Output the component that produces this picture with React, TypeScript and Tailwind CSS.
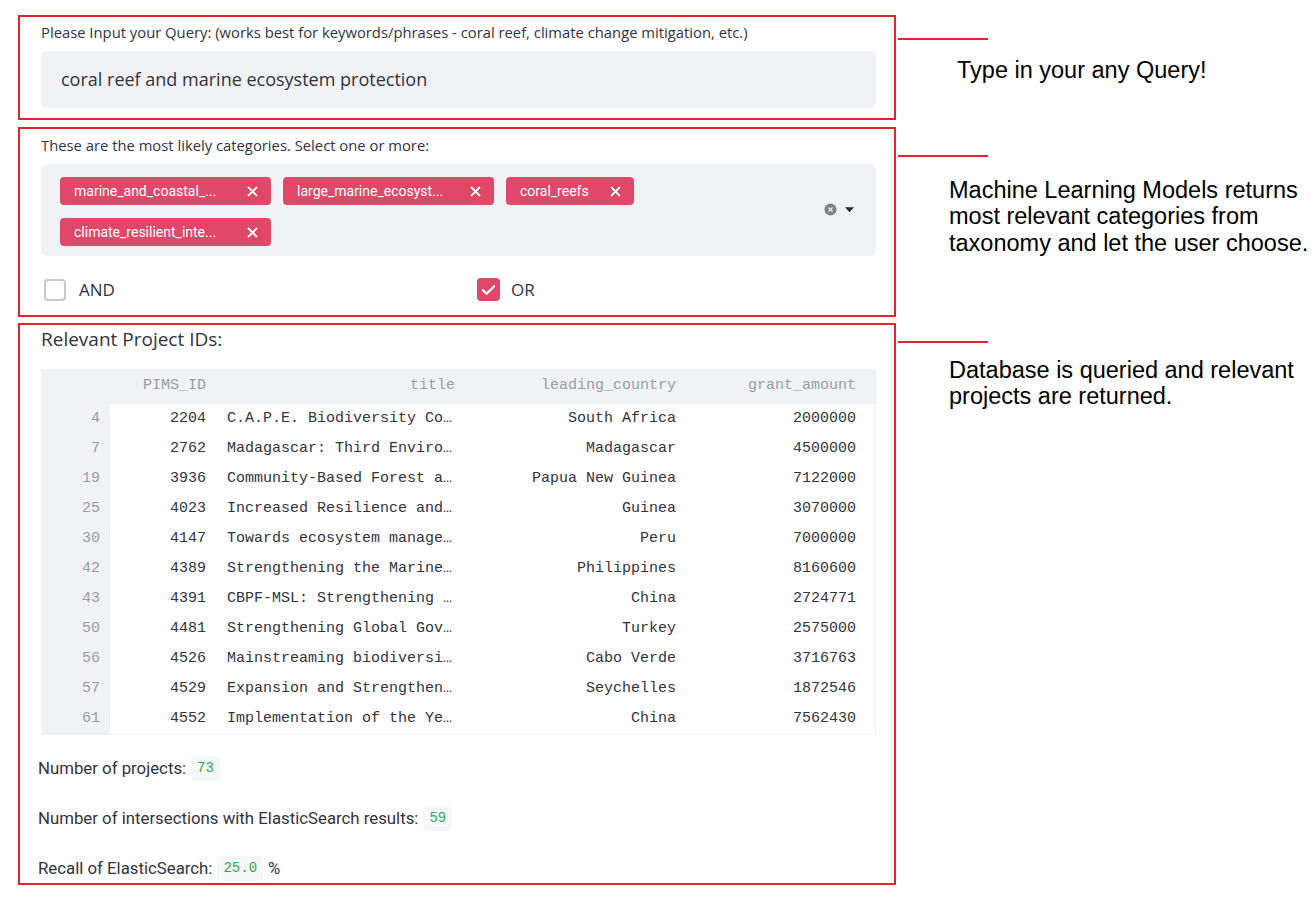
const RED = "border-[#e0262c]";
const OPEN = { fontFamily: '"Open Sans", Roboto, sans-serif' };
const MONO = { fontFamily: '"Liberation Mono", monospace' };

const rows: [number, number, string, string, number][] = [
  [4, 2204, "C.A.P.E. Biodiversity Co…", "South Africa", 2000000],
  [7, 2762, "Madagascar: Third Enviro…", "Madagascar", 4500000],
  [19, 3936, "Community-Based Forest a…", "Papua New Guinea", 7122000],
  [25, 4023, "Increased Resilience and…", "Guinea", 3070000],
  [30, 4147, "Towards ecosystem manage…", "Peru", 7000000],
  [42, 4389, "Strengthening the Marine…", "Philippines", 8160600],
  [43, 4391, "CBPF-MSL: Strengthening …", "China", 2724771],
  [50, 4481, "Strengthening Global Gov…", "Turkey", 2575000],
  [56, 4526, "Mainstreaming biodiversi…", "Cabo Verde", 3716763],
  [57, 4529, "Expansion and Strengthen…", "Seychelles", 1872546],
  [61, 4552, "Implementation of the Ye…", "China", 7562430],
];

function Cross() {
  return (
    <svg width="11" height="11" viewBox="0 0 10 10" className="shrink-0">
      <path d="M1.5 1.5 L8.5 8.5 M8.5 1.5 L1.5 8.5" stroke="white" strokeWidth="1.8" strokeLinecap="round" />
    </svg>
  );
}

function Tag({ label, w = "w-[211px]" }: { label: string; w?: string }) {
  return (
    <div className={`flex h-[28px] ${w} items-center justify-between rounded-[4px] bg-[#e0486a] pl-[14px] pr-[13px] text-[14px] text-white`}>
      <span>{label}</span>
      <Cross />
    </div>
  );
}

function Note({ top, text, pad }: { top: string; text: string[]; pad: string }) {
  return (
    <div className="flex flex-col">
      <div className={`ml-[2px] h-[1.5px] w-[90px] bg-[#e0262c] ${top}`} />
      <div className={`${pad} whitespace-nowrap text-[23.5px] leading-[26.5px] text-black`} style={{ fontFamily: '"Liberation Sans", Arial, sans-serif' }}>
        {text.map((t) => (
          <div key={t}>{t}</div>
        ))}
      </div>
    </div>
  );
}

function Code({ children }: { children: React.ReactNode }) {
  return (
    <span className="ml-[5px] inline-flex h-[25px] items-center rounded-[4px] bg-[#f6f7f9] px-[6px] text-[14px] text-[#35a852]" style={MONO}>
      {children}
    </span>
  );
}

export default function App() {
  return (
    <div className="h-[908px] w-[1313px] overflow-hidden bg-white pl-[18px] pt-[15px] text-[#31333f]" style={{ fontFamily: 'Roboto, "Noto Sans", sans-serif' }}>
      {/* query */}
      <div className="flex">
        <div className={`h-[105px] w-[878px] shrink-0 border-2 ${RED} pl-[21px] pr-[18px] pt-[6px]`}>
          <div className="text-[14.8px] leading-[19px]" style={OPEN}>
            Please Input your Query: (works best for keywords/phrases - coral reef, climate change mitigation, etc.)
          </div>
          <div className="mt-[9px] flex h-[57px] items-center rounded-[6px] bg-[#f0f2f6] pl-[20px] text-[18px]" style={OPEN}>
            coral reef and marine ecosystem protection
          </div>
        </div>
        <Note top="mt-[23px]" pad="ml-[61px] mt-[17px]" text={["Type in your any Query!"]} />
      </div>

      {/* categories */}
      <div className="mt-[7px] flex">
        <div className={`h-[190px] w-[878px] shrink-0 border-2 ${RED} pl-[21px] pr-[18px] pt-[7px]`}>
          <div className="text-[14.8px] leading-[19px]" style={OPEN}>
            These are the most likely categories. Select one or more:
          </div>
          <div className="mt-[9px] flex h-[92px] rounded-[6px] bg-[#f0f2f6] pl-[19px] pr-[22px] pt-[13px]">
            <div className="flex flex-1 flex-col gap-[13px]">
              <div className="flex gap-[12px]">
                <Tag label="marine_and_coastal_..." />
                <Tag label="large_marine_ecosyst..." />
                <Tag label="coral_reefs" w="w-[128px]" />
              </div>
              <div className="flex">
                <Tag label="climate_resilient_inte..." />
              </div>
            </div>
            <div className="flex items-center gap-[8px] self-center pb-[14px]">
              <svg width="13" height="13" viewBox="0 0 14 14">
                <circle cx="7" cy="7" r="6.5" fill="#7f818c" />
                <path d="M4.8 4.8 L9.2 9.2 M9.2 4.8 L4.8 9.2" stroke="#f0f2f6" strokeWidth="1.3" />
              </svg>
              <svg width="9" height="6" viewBox="0 0 10 6">
                <path d="M0 0 L10 0 L5 5.5 Z" fill="#262730" />
              </svg>
            </div>
          </div>
          <div className="mt-[21px] flex items-center text-[17px]" style={OPEN}>
            <div className="flex w-[436px] items-center">
              <div className="ml-[3px] h-[22px] w-[22px] rounded-[4px] border-2 border-[#c7c9cf] bg-white" />
              <span className="ml-[13px]">AND</span>
            </div>
            <div className="flex h-[23px] w-[23px] items-center justify-center rounded-[4px] bg-[#e0486a]">
              <svg width="15" height="12" viewBox="0 0 16 12">
                <path d="M2 6.2 L6 10 L14 2" fill="none" stroke="white" strokeWidth="2.4" strokeLinecap="round" strokeLinejoin="round" />
              </svg>
            </div>
            <span className="ml-[11px]">OR</span>
          </div>
        </div>
        <Note
          top="mt-[28px]"
          pad="ml-[53px] mt-[20px]"
          text={["Machine Learning Models returns", "most relevant categories from", "taxonomy and let the user choose."]}
        />
      </div>

      {/* results */}
      <div className="mt-[6px] flex">
        <div className={`h-[562px] w-[878px] shrink-0 border-2 ${RED} pl-[21px] pr-[18px] pt-[2px]`}>
          <div className="text-[19px] leading-[24px]" style={OPEN}>
            Relevant Project IDs:
          </div>
          <div className="mt-[18px] border-b border-r border-[#eef0f4]" style={MONO}>
            <table className="w-full border-collapse text-[15px]">
              <thead>
                <tr className="h-[35px] bg-[#f0f2f6] text-[#9a9ca4]">
                  <th className="w-[69px] font-normal" />
                  <th className="w-[98px] pr-[2px] text-right font-normal">PIMS_ID</th>
                  <th className="w-[249px] pr-[2px] text-right font-normal">title</th>
                  <th className="w-[221px] pr-[2px] text-right font-normal">leading_country</th>
                  <th className="pr-[19px] text-right font-normal">grant_amount</th>
                </tr>
              </thead>
              <tbody>
                {rows.map(([i, id, title, country, amt]) => (
                  <tr key={i} className="h-[30px]">
                    <td className="bg-[#f0f2f6] pr-[10px] text-right text-[#9a9ca4]">{i}</td>
                    <td className="pr-[2px] text-right">{id}</td>
                    <td className="pl-[19px] text-left">{title}</td>
                    <td className="pr-[2px] text-right">{country}</td>
                    <td className="pr-[19px] text-right">{amt}</td>
                  </tr>
                ))}
              </tbody>
            </table>
          </div>
          <div className="-ml-[3px] mt-[21px] flex items-center text-[16.8px]">
            <span>Number of projects:</span>
            <Code>73</Code>
          </div>
          <div className="-ml-[3px] mt-[25px] flex items-center text-[16.8px]">
            <span>Number of intersections with ElasticSearch results:</span>
            <Code>59</Code>
          </div>
          <div className="-ml-[3px] mt-[25px] flex items-center text-[16.8px]">
            <span>Recall of ElasticSearch:</span>
            <Code>25.0</Code>
            <span className="ml-[5px]">%</span>
          </div>
        </div>
        <Note
          top="mt-[18px]"
          pad="ml-[53px] mt-[14px]"
          text={["Database is queried and relevant", "projects are returned."]}
        />
      </div>
    </div>
  );
}
